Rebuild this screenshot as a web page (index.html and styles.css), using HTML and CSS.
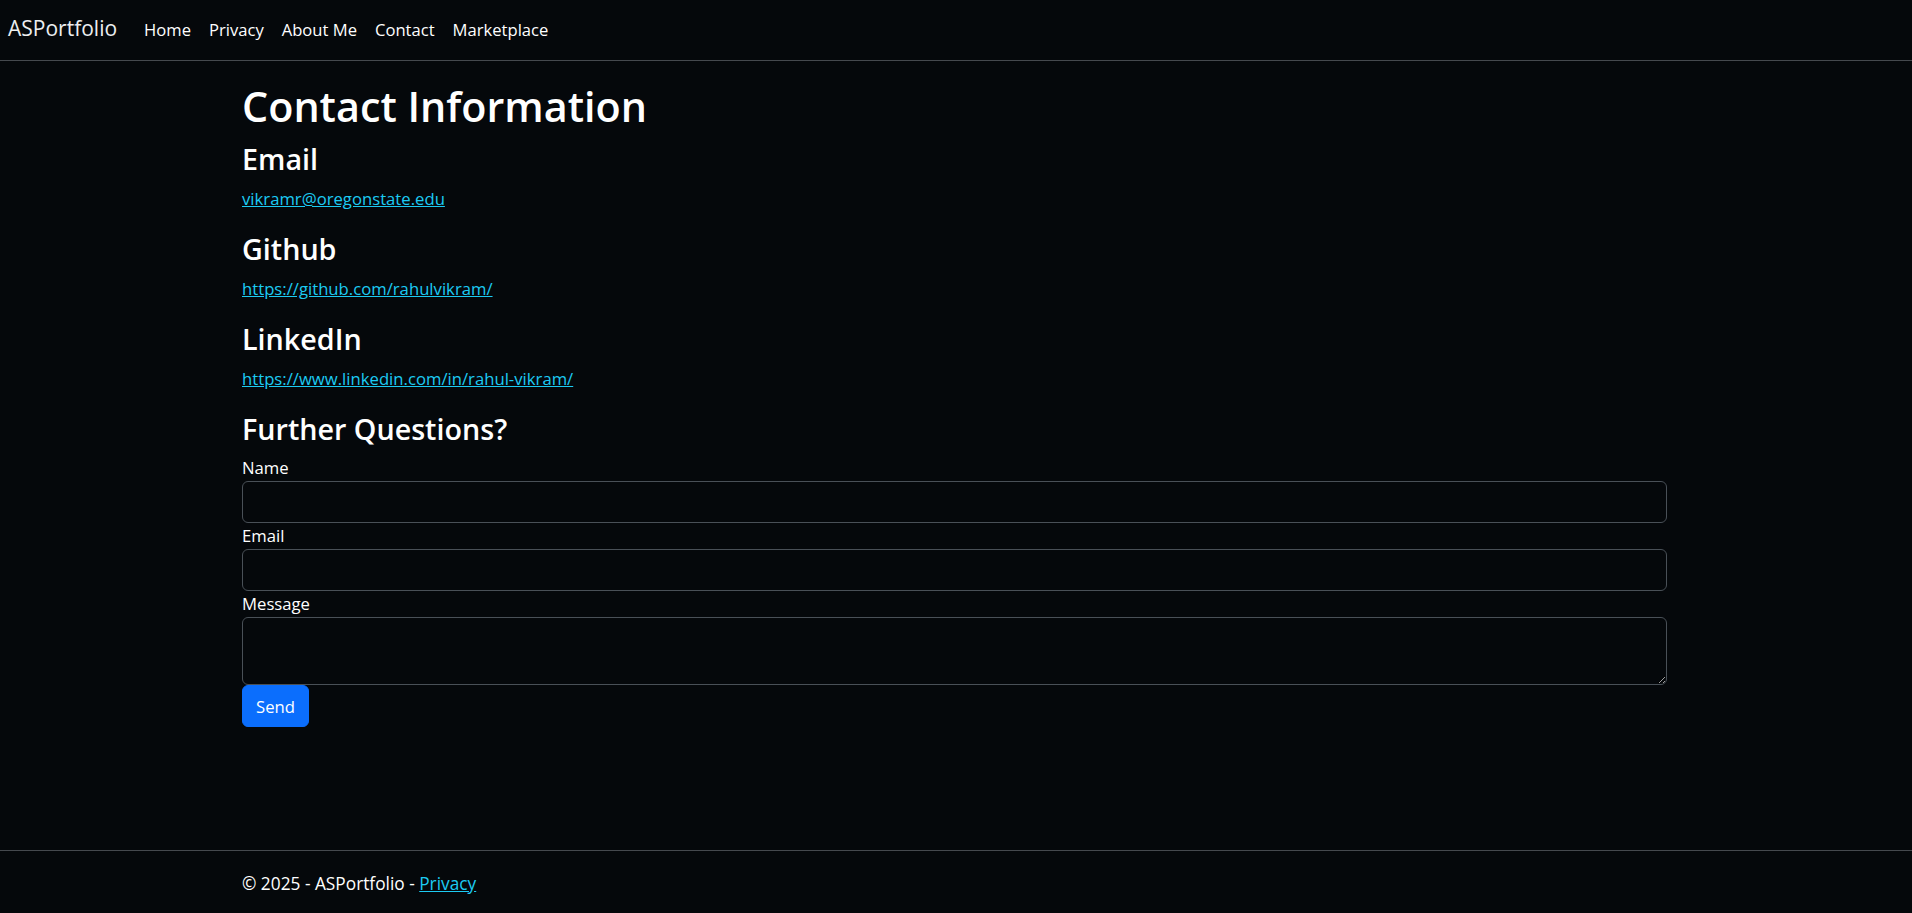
FILE: index.html
```html
<!DOCTYPE html>
<html lang="en">
<head>
<meta charset="utf-8">
<title>Contact - ASPortfolio</title>
<link rel="stylesheet" href="styles.css">
</head>
<body>
<div class="page">
  <header class="navbar">
    <a class="brand" href="#">ASPortfolio</a>
    <nav class="nav">
      <a class="nav-link" href="#">Home</a>
      <a class="nav-link" href="#">Privacy</a>
      <a class="nav-link" href="#">About Me</a>
      <a class="nav-link" href="#">Contact</a>
      <a class="nav-link" href="#">Marketplace</a>
    </nav>
  </header>

  <main class="container main">
    <h1 class="title">Contact Information</h1>

    <h3 class="section-title">Email</h3>
    <p class="section-text"><a class="link" href="#">vikramr@oregonstate.edu</a></p>

    <h3 class="section-title">Github</h3>
    <p class="section-text"><a class="link" href="#">https://github.com/rahulvikram/</a></p>

    <h3 class="section-title">LinkedIn</h3>
    <p class="section-text"><a class="link" href="#">https://www.linkedin.com/in/rahul-vikram/</a></p>

    <h3 class="section-title form-title">Further Questions?</h3>
    <form class="contact-form">
      <label class="form-label" for="name">Name</label>
      <input class="form-control" id="name" type="text">
      <label class="form-label" for="email">Email</label>
      <input class="form-control" id="email" type="email">
      <label class="form-label" for="message">Message</label>
      <textarea class="form-control form-textarea" id="message"></textarea>
      <div class="actions"><button class="btn" type="button">Send</button></div>
    </form>
  </main>

  <footer class="footer">
    <div class="container footer-inner">© 2025 - ASPortfolio - <a class="link" href="#">Privacy</a></div>
  </footer>
</div>
</body>
</html>
```

FILE: styles.css
```css
* { box-sizing: border-box; }

html, body {
  margin: 0;
  padding: 0;
  background: #05080b;
  color: #ffffff;
  font-family: "Open Sans", "Noto Sans", "Liberation Sans", sans-serif;
  font-size: 16.7px;
}

.page {
  min-height: 100vh;
  display: flex;
  flex-direction: column;
}

.navbar {
  height: 61px;
  border-bottom: 1px solid #45494e;
  display: flex;
  align-items: baseline;
  padding: 13px 8px 0;
}

.brand {
  color: #eceef0;
  text-decoration: none;
  font-size: 21px;
  line-height: 30px;
  margin-right: 18px;
}

.nav {
  display: flex;
  align-items: baseline;
}

.nav-link {
  color: #ffffff;
  text-decoration: none;
  font-size: 16.6px;
  line-height: 24px;
  padding: 0 9px;
}

.container {
  width: 1425px;
  margin-left: calc(50% - 714px);
}

.main {
  flex: 1;
  padding-top: 18px;
}

.title {
  font-size: 41.3px;
  font-weight: 600;
  line-height: 54px;
  margin: 0 0 7px;
}

.section-title {
  font-size: 28.7px;
  font-weight: 600;
  line-height: 37px;
  margin: 0 0 8px;
}

.form-title {
  margin-bottom: 8px;
}

.section-text {
  margin: 0 0 18px;
  line-height: 27px;
}

.link {
  color: #1ccbf3;
  text-decoration: underline;
}

.contact-form {
  display: flex;
  flex-direction: column;
}

.form-label {
  display: block;
  line-height: 26px;
  font-size: 16.7px;
}

.form-control {
  display: block;
  width: 100%;
  height: 42px;
  background: #05080b;
  color: #ffffff;
  border: 1px solid #495057;
  border-radius: 6px;
  padding: 6px 13px;
  font-family: inherit;
  font-size: 16.7px;
  outline: none;
}

.form-textarea {
  height: 68px;
  resize: vertical;
}

.actions {
  display: flex;
}

.btn {
  height: 42px;
  width: 67px;
  background: #0b6efd;
  color: #ffffff;
  border: 1px solid #0b6efd;
  border-radius: 6px;
  font-family: inherit;
  font-size: 16.7px;
  padding: 0;
}

.footer {
  height: 63px;
  border-top: 1px solid #45494e;
}

.footer-inner {
  padding-top: 5px;
  line-height: 56px;
  color: #ffffff;
  font-size: 17.3px;
}
```
